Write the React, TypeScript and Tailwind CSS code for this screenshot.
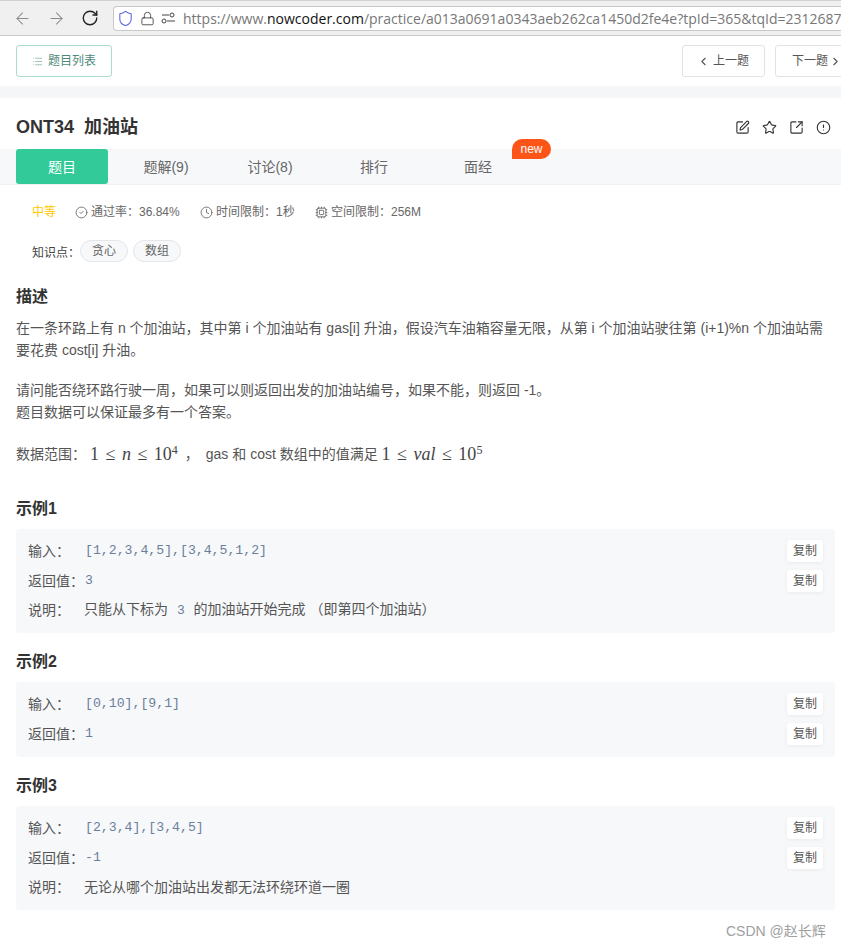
import { ArrowLeft, ArrowRight, ChevronLeft, ChevronRight, CircleAlert, CircleCheck, Clock, Cpu, List, Lock, RotateCw, Shield, SquareArrowOutUpRight, SquarePen, Star } from 'lucide-react'

const TABS = ['题解(9)', '讨论(8)', '排行', '面经']

const EXAMPLES = [
  {
    title: '示例1',
    input: '[1,2,3,4,5],[3,4,5,1,2]',
    output: '3',
    note: (
      <>
        只能从下标为 <span className="mx-[5px] font-['Liberation_Mono',monospace] text-[13px] text-[#6a7f9c]">3</span> 的加油站开始完成 （即第四个加油站）
      </>
    ),
  },
  { title: '示例2', input: '[0,10],[9,1]', output: '1', note: null },
  { title: '示例3', input: '[2,3,4],[3,4,5]', output: '-1', note: '无论从哪个加油站出发都无法环绕环道一圈' },
]

function CopyButton() {
  return (
    <button type="button" className="flex h-[22px] w-9 items-center justify-center rounded-[3px] bg-white text-[12px] text-[#555] shadow-[0_1px_4px_rgba(0,0,0,0.06)]">
      复制
    </button>
  )
}

function Row({ label, children, copy }: { label: string; children: React.ReactNode; copy?: boolean }) {
  return (
    <div className="flex h-[22px] items-center justify-between">
      <div className="flex items-center">
        <span className="w-[57px] text-[14px] text-[#555]">{label}</span>
        {children}
      </div>
      {copy && <CopyButton />}
    </div>
  )
}

function Example({ title, input, output, note }: (typeof EXAMPLES)[number]) {
  return (
    <section>
      <h3 className="h-[22px] text-[16px] leading-[24px] font-bold text-[#333]">{title}</h3>
      <div className="mt-[10px] flex flex-col gap-[8px] rounded-[4px] bg-[#f7f8fa] pt-[11px] pr-3 pb-[12px] pl-3">
        <Row label="输入：" copy>
          <code className="font-['Liberation_Mono',monospace] text-[13.2px] text-[#6a7f9c]">{input}</code>
        </Row>
        <Row label="返回值：" copy>
          <code className="font-['Liberation_Mono',monospace] text-[13.2px] text-[#6a7f9c]">{output}</code>
        </Row>
        {note && (
          <div className="-mt-px">
            <Row label="说明：">
              <span className="-ml-px text-[14px] text-[#555]">{note}</span>
            </Row>
          </div>
        )}
      </div>
    </section>
  )
}

function Math({ children }: { children: React.ReactNode }) {
  return <span className="font-['Liberation_Serif',serif] text-[18px] [word-spacing:2px] text-[#444]">{children}</span>
}

export default function App() {
  return (
    <div className="relative h-[948px] w-[841px] overflow-hidden bg-white font-['Liberation_Sans','Noto_Sans_CJK_SC',sans-serif] text-[14px] text-[#555]">
      {/* browser bar */}
      <div className="flex h-9 items-center border-t border-b border-t-[#d0d0d0] border-b-[#ccc] bg-[#f0f0f0]">
        <div className="flex w-[113px] shrink-0 items-center gap-[15px] pl-[13px]">
          <ArrowLeft size={19} strokeWidth={1.3} className="text-[#8a8a8a]" />
          <ArrowRight size={19} strokeWidth={1.3} className="text-[#8a8a8a]" />
          <RotateCw size={18} strokeWidth={1.8} className="text-[#222]" />
        </div>
        <div className="flex h-[25px] min-w-0 flex-1 items-center gap-[6px] rounded-l-[4px] border border-r-0 border-[#c8c8c8] bg-white pl-[3px]">
          <Shield size={17} strokeWidth={1.5} className="shrink-0 text-[#5a62e0]" />
          <Lock size={15} strokeWidth={1.4} className="shrink-0 text-[#444]" />
          <svg width="15" height="12" viewBox="0 0 15 12" fill="none" stroke="#444" strokeWidth="1" className="shrink-0">
            <circle cx="11" cy="3" r="2" />
            <path d="M1 3h7" />
            <circle cx="3" cy="9" r="2" />
            <path d="M6 9h8" />
          </svg>
          <span className="ml-px whitespace-nowrap font-['Open_Sans',sans-serif] text-[14px] text-[#777]">
            https://www.<span className="text-[#111]">nowcoder.com</span>/practice/a013a0691a0343aeb262ca1450d2fe4e?tpId=365&amp;tqId=2312687
          </span>
        </div>
      </div>

      {/* prev / next bar */}
      <div className="flex h-[50px] items-center justify-between pl-4">
        <button type="button" className="flex h-8 w-24 items-center justify-center gap-[5px] rounded-[3px] border border-[#a9dccb] text-[12px] text-[#4f8a7a]">
          <List size={11} strokeWidth={1.5} className="text-[#7aa69a]" />
          题目列表
        </button>
        <div className="flex gap-[10px]">
          <button type="button" className="flex h-8 w-[83px] items-center gap-[3px] rounded-[3px] border border-[#e0e2e8] pl-[14px] text-[12px] text-[#555]">
            <ChevronLeft size={13} strokeWidth={2} />
            上一题
          </button>
          <button type="button" className="-mr-[15px] flex h-8 w-[81px] items-center gap-px rounded-[3px] border border-[#e0e2e8] pl-4 text-[12px] text-[#555]">
            下一题
            <ChevronRight size={13} strokeWidth={2} />
          </button>
        </div>
      </div>
      <div className="h-3 bg-[#f5f6f8]" />

      {/* title */}
      <div className="flex h-[51px] items-center justify-between pt-[8px] pr-[10px] pl-4">
        <h1 className="text-[18px] font-bold text-[#333]">ONT34&nbsp;&nbsp;加油站</h1>
        <div className="flex items-center gap-3 text-[#333]">
          <SquarePen size={15} strokeWidth={1.8} />
          <Star size={15} strokeWidth={1.8} />
          <SquareArrowOutUpRight size={15} strokeWidth={1.8} />
          <CircleAlert size={15} strokeWidth={1.8} />
        </div>
      </div>

      {/* tabs */}
      <div className="flex h-9 gap-3 border-b border-[#f0f1f3] bg-[#f7f8fa] pl-4">
        <div className="flex h-[35px] w-[92px] items-center justify-center rounded-[3px] bg-[#32ca99] pt-px text-[14px] text-white">题目</div>
        {TABS.map((tab) => (
          <div key={tab} className="relative flex h-[35px] w-[92px] items-center justify-center pt-[2px] text-[14px] text-[#666]">
            {tab}
            {tab === '面经' && (
              <span className="absolute -top-[10px] left-[80px] flex h-5 w-[39px] items-center justify-center rounded-t-[10px] rounded-br-[10px] bg-[#fd5417] text-[12px] text-white">
                new
              </span>
            )}
          </div>
        ))}
      </div>

      {/* meta */}
      <div className="mt-[18px] flex h-[18px] items-center pl-8 text-[12px] text-[#666]">
        <span className="w-[43px] text-[#ffc800]">中等</span>
        <CircleCheck size={13} strokeWidth={1.6} className="mr-[3px]" />
        <span className="w-[109px]">通过率：36.84%</span>
        <Clock size={13} strokeWidth={1.6} className="mr-[3px]" />
        <span className="w-[99px]">时间限制：1秒</span>
        <Cpu size={13} strokeWidth={1.6} className="mr-[3px]" />
        <span>空间限制：256M</span>
      </div>
      <div className="mt-[19px] flex h-[22px] items-center pl-8 text-[12px] text-[#444]">
        <span className="pt-[3px]">知识点：</span>
        <div className="flex gap-[5px]">
          <span className="flex h-[22px] w-12 items-center justify-center rounded-full border border-[#e5e6ea] bg-[#f7f8fa] text-[#666]">贪心</span>
          <span className="flex h-[22px] w-12 items-center justify-center rounded-full border border-[#e5e6ea] bg-[#f7f8fa] text-[#666]">数组</span>
        </div>
      </div>

      {/* description */}
      <div className="pr-[6px] pl-4">
        <h2 className="mt-[24px] text-[16px] leading-[22px] font-bold text-[#333]">描述</h2>
        <div className="mt-[9px] text-[14px] leading-[22px] text-[#555]">
          <p>在一条环路上有 n 个加油站，其中第 i 个加油站有 gas[i] 升油，假设汽车油箱容量无限，从第 i 个加油站驶往第 (i+1)%n 个加油站需要花费 cost[i] 升油。</p>
          <p className="mt-[18px]">请问能否绕环路行驶一周，如果可以则返回出发的加油站编号，如果不能，则返回 -1。</p>
          <p>题目数据可以保证最多有一个答案。</p>
          <p className="mt-[10px] flex h-[42px] items-center">
            数据范围：
            <span className="ml-[4px]">
              <Math>
                1 ≤ <i>n</i> ≤ 10<sup className="text-[12px]">4</sup>
              </Math>
            </span>
            <span className="mx-[7px]">，</span>
            gas 和 cost 数组中的值满足&nbsp;
            <Math>
              1 ≤ <i>val</i> ≤ 10<sup className="text-[12px]">5</sup>
            </Math>
          </p>
        </div>

        <div className="mt-[22px] flex flex-col gap-[17px]">
          {EXAMPLES.map((example) => (
            <Example key={example.title} {...example} />
          ))}
        </div>
      </div>

      <span className="absolute top-[921px] left-[726px] text-[14px] text-[#a0a0a0]">CSDN @赵长辉</span>
    </div>
  )
}
